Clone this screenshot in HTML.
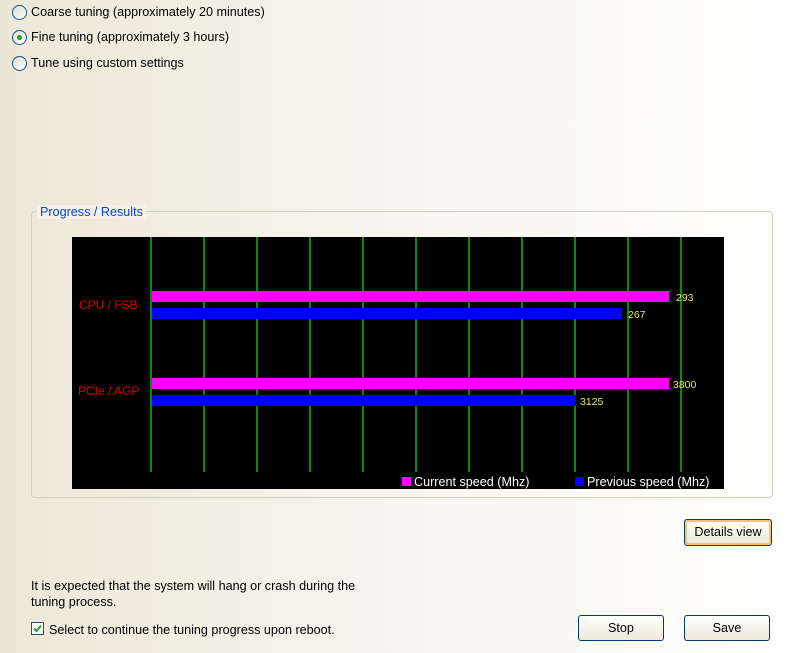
<!DOCTYPE html>
<html><head><style>
body{margin:0;width:800px;height:653px;overflow:hidden;position:relative;font-family:"Liberation Sans",Arial,sans-serif;font-size:12.6px;color:#000;
background:linear-gradient(90deg,#ece8d8 0%,#f6f4ec 45%,#ffffff 100%);}
.a{position:absolute;white-space:nowrap}
.radio{position:absolute;width:13px;height:13px;border:1px solid #1c5180;border-radius:50%;background:linear-gradient(135deg,#dcdcd6,#fff)}
.dot{position:absolute;left:4px;top:4px;width:5px;height:5px;border-radius:50%;background:#21a121}
.btn{position:absolute;border:1px solid #003c74;border-radius:3px;background:linear-gradient(#fff,#ece9d8);text-align:center;box-sizing:border-box}
.g{position:absolute;top:237px;width:2px;height:235px;background:#0a8a0a}
.bar{position:absolute;left:152px;height:11px}
.num{position:absolute;color:#e8e84a;font-size:10.5px}
</style></head><body>
<div class="radio" style="left:12px;top:5px"></div><div class="a" style="left:31px;top:5px">Coarse tuning (approximately 20 minutes)</div>
<div class="radio" style="left:12px;top:30px"><div class="dot"></div></div><div class="a" style="left:31px;top:30px">Fine tuning (approximately 3 hours)</div>
<div class="radio" style="left:12px;top:56px"></div><div class="a" style="left:31px;top:56px">Tune using custom settings</div>

<div style="position:absolute;left:31px;top:211px;width:740px;height:285px;border:1px solid #d0d0bf;border-radius:4px"></div>
<div class="a" style="left:37px;top:205px;padding:0 3px;color:#0046d5;background:#f4f2ea">Progress / Results</div>

<div style="position:absolute;left:72px;top:237px;width:652px;height:252px;background:#000"></div>
<div class="g" style="left:150px"></div><div class="g" style="left:203px"></div><div class="g" style="left:256px"></div><div class="g" style="left:309px"></div><div class="g" style="left:362px"></div><div class="g" style="left:415px"></div><div class="g" style="left:468px"></div><div class="g" style="left:521px"></div><div class="g" style="left:574px"></div><div class="g" style="left:627px"></div><div class="g" style="left:680px"></div>
<div class="bar" style="top:291px;width:517px;background:#ff00ff"></div>
<div class="bar" style="top:308px;width:470px;background:#0000ff"></div>
<div class="bar" style="top:378px;width:517px;background:#ff00ff"></div>
<div class="bar" style="top:395px;width:424px;background:#0000ff"></div>
<div class="num" style="left:676px;top:292px">293</div>
<div class="num" style="left:628px;top:309px">267</div>
<div class="num" style="left:673px;top:379px">3800</div>
<div class="num" style="left:580px;top:396px">3125</div>
<div class="a" style="left:79px;top:298px;color:#e00000;font-size:12px">CPU / FSB</div>
<div class="a" style="left:78px;top:384px;color:#e00000;font-size:12px">PCIe / AGP</div>
<div style="position:absolute;left:402px;top:477px;width:9px;height:9px;background:#ff00ff"></div>
<div class="a" style="left:414px;top:475px;color:#fff">Current speed (Mhz)</div>
<div style="position:absolute;left:575px;top:477px;width:9px;height:9px;background:#0000ff"></div>
<div class="a" style="left:587px;top:475px;color:#fff">Previous speed (Mhz)</div>

<div class="btn" style="left:684px;top:519px;width:88px;height:27px;line-height:25px;box-shadow:inset 0 0 0 2px #f5c46a">Details view</div>

<div class="a" style="left:31px;top:579px">It is expected that the system will hang or crash during the</div>
<div class="a" style="left:31px;top:595px">tuning process.</div>
<div style="position:absolute;left:31px;top:622px;width:13px;height:13px;border:1px solid #1c5180;background:#fff;box-sizing:border-box"></div>
<svg class="a" style="left:31px;top:622px" width="13" height="13"><path d="M3 6.5 L5.5 9 L10 3.5" stroke="#21a121" stroke-width="2" fill="none"/></svg>
<div class="a" style="left:49px;top:623px">Select to continue the tuning progress upon reboot.</div>

<div class="btn" style="left:578px;top:615px;width:86px;height:26px;line-height:24px">Stop</div>
<div class="btn" style="left:684px;top:615px;width:86px;height:26px;line-height:24px">Save</div>
</body></html>
